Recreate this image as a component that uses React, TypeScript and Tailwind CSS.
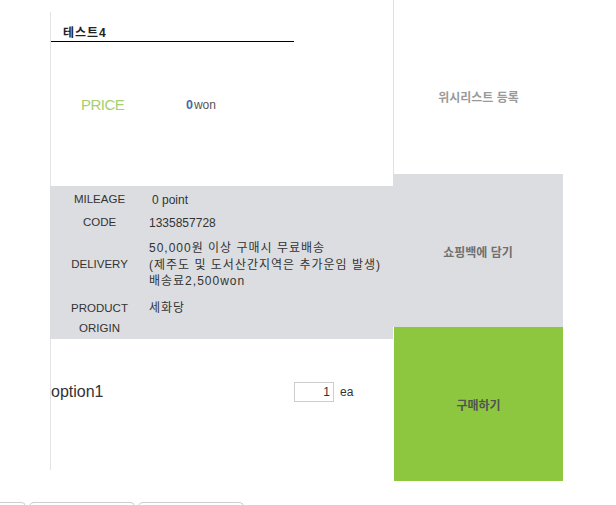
const font = { fontFamily: '"Liberation Sans", "Noto Sans CJK KR", sans-serif' };

const infoRows = [
  { label: "MILEAGE", value: ["0 point"] },
  { label: "CODE", value: ["1335857728"] },
];

function InfoLabel({ children }: { children: React.ReactNode }) {
  return (
    <div className="w-[99px] shrink-0 text-center text-[11.5px] text-[#333]">
      {children}
    </div>
  );
}

export default function App() {
  return (
    <div
      className="w-[616px] h-[505px] overflow-hidden bg-white text-[#333]"
      style={font}
    >
      <div className="flex items-start">
        {/* product info column */}
        <div className="ml-[50px] mt-[12px] w-[343px] shrink-0">
          <div className="h-[174px] border-l border-[#e3e3e3]">
            <div className="w-[243px] border-b border-black pt-[14px] pb-[1px] pl-3 text-[12px] leading-[14px] font-bold tracking-[1px] text-[#222]">
              테스트4
            </div>
            <div className="mt-[53px] flex h-[20px] items-center pl-[30px]">
              <span className="w-[105px] text-[15px] tracking-[-0.5px] text-[#a5d06d]">
                PRICE
              </span>
              <span className="text-[12.5px] font-bold text-[#3b6cb0]">0</span>
              <span className="ml-[1px] text-[12px] text-[#555]">won</span>
            </div>
          </div>

          <div className="h-[153px] bg-[#dcdde0] pt-[2px] text-[12px]">
            {infoRows.map((r) => (
              <div key={r.label} className="flex h-[23px] items-center">
                <InfoLabel>{r.label}</InfoLabel>
                <div className={r.label === "MILEAGE" ? "pl-[3px]" : ""}>
                  {r.value}
                </div>
              </div>
            ))}
            <div className="mt-[6px] flex items-center">
              <InfoLabel>DELIVERY</InfoLabel>
              <div className="leading-[16.5px] tracking-[1px]">
                <div>50,000원 이상 구매시 무료배송</div>
                <div>(제주도 및 도서산간지역은 추가운임 발생)</div>
                <div>배송료2,500won</div>
              </div>
            </div>
            <div className="mt-[8px] flex items-start leading-[20px]">
              <InfoLabel>
                PRODUCT
                <br />
                ORIGIN
              </InfoLabel>
              <div className="tracking-[1px]">세화당</div>
            </div>
          </div>

          <div className="h-[131px] border-l border-[#e3e3e3] pt-[43px]">
            <div className="flex h-[20px] items-center">
              <span className="w-[243px] text-[16px] text-[#333]">option1</span>
              <input
                readOnly
                value="1"
                className="h-[20px] w-[40px] border border-[#ccc] px-[3px] text-right text-[12px] text-[#333] outline-none"
              />
              <span className="ml-[6px] text-[12px] text-[#333]">ea</span>
            </div>
          </div>
        </div>

        {/* action buttons */}
        <div className="w-[170px] shrink-0 text-[12px] font-bold">
          <div className="flex h-[174px] items-center justify-center border-l border-[#e0e0e0] pt-[22px] text-[#9a9a9a]">
            위시리스트 등록
          </div>
          <div className="flex h-[153px] items-center justify-center bg-[#dcdde0] pt-[4px] text-[#707070]">
            쇼핑백에 담기
          </div>
          <div className="ml-[1px] flex h-[154px] items-center justify-center bg-[#8dc63f] pt-[3px] text-[#505550]">
            구매하기
          </div>
        </div>
      </div>

      <div className="mt-[21px] flex gap-[3px]">
        <div className="h-[10px] w-[26px] rounded-tr-[5px] border-t border-r border-[#cfcfcf]" />
        <div className="h-[10px] w-[106px] rounded-t-[5px] border-t border-x border-[#cfcfcf]" />
        <div className="h-[10px] w-[106px] rounded-t-[5px] border-t border-x border-[#cfcfcf]" />
      </div>
    </div>
  );
}
